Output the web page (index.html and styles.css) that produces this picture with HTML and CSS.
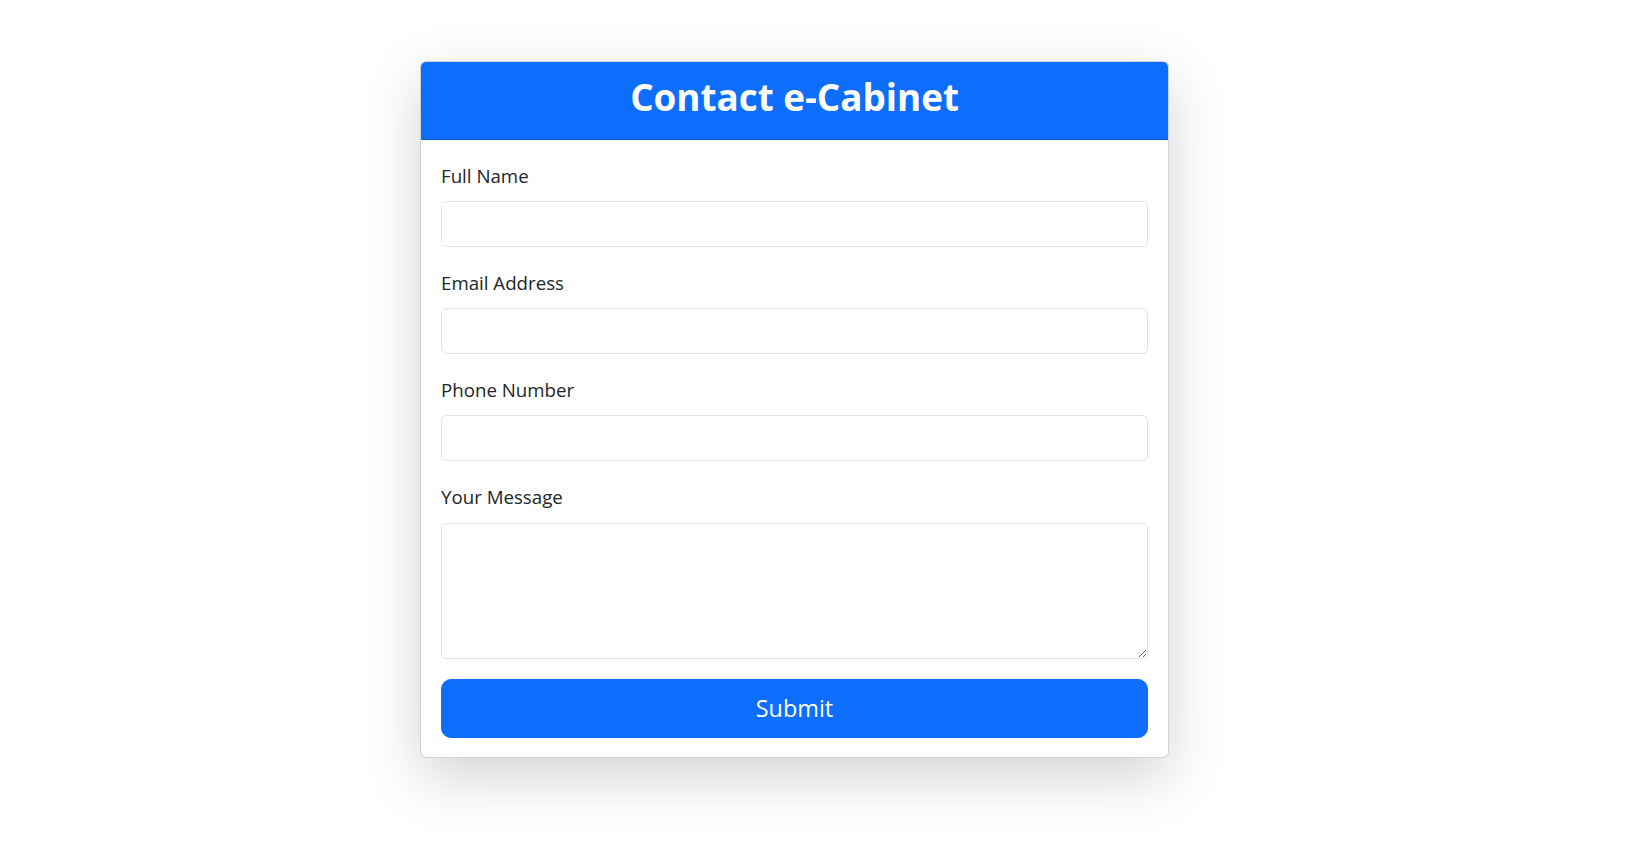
FILE: index.html
```html
<!DOCTYPE html>
<html lang="en">
<head>
<meta charset="utf-8">
<title>Contact e-Cabinet</title>
<link rel="stylesheet" href="styles.css">
</head>
<body>
<div class="page">
  <div class="card">
    <div class="card-header">
      <h2 class="title">Contact e-Cabinet</h2>
    </div>
    <form class="card-body">
      <div class="field">
        <label class="label" for="name">Full Name</label>
        <input class="control" id="name" type="text">
      </div>
      <div class="field">
        <label class="label" for="email">Email Address</label>
        <input class="control" id="email" type="email">
      </div>
      <div class="field">
        <label class="label" for="phone">Phone Number</label>
        <input class="control" id="phone" type="tel">
      </div>
      <div class="field field-last">
        <label class="label" for="msg">Your Message</label>
        <textarea class="control textarea" id="msg"></textarea>
      </div>
      <button class="btn-submit" type="button">Submit</button>
    </form>
  </div>
</div>
</body>
</html>
```
FILE: styles.css
```css
* { box-sizing: border-box; }
html, body { margin: 0; padding: 0; background: #fff; }
body {
  font-family: "Open Sans", "Noto Sans", sans-serif;
  color: #212529;
}
.page {
  min-height: 100vh;
  padding-top: 61px;
  padding-left: 420px;
}
.card {
  width: 749px;
  background: #fff;
  border: 1px solid rgba(0, 0, 0, 0.175);
  border-radius: 6px;
  box-shadow: 0 19px 58px rgba(0, 0, 0, 0.175);
  overflow: hidden;
}
.card-header {
  height: 78px;
  background: #0d6efd;
  border-bottom: 1px solid rgba(0, 0, 0, 0.175);
  padding-top: 12.5px;
  text-align: center;
}
.title {
  margin: 0;
  color: #fff;
  font-size: 36.8px;
  font-weight: 700;
  line-height: 44px;
}
.card-body {
  display: flex;
  flex-direction: column;
  padding: 21.5px 20px 19.5px;
}
.field {
  display: flex;
  flex-direction: column;
  margin-bottom: 22px;
}
.field-last { margin-bottom: 20px; }
.label {
  font-size: 18.7px;
  line-height: 28.8px;
  margin-bottom: 10.5px;
}
.control {
  display: block;
  width: 100%;
  height: 46px;
  border: 1px solid #dee2e6;
  border-radius: 5.5px;
  background: #fff;
  font-family: inherit;
  font-size: 18.7px;
  padding: 7px 14px;
  outline: none;
}
.textarea {
  height: 136px;
  resize: vertical;
}
.btn-submit {
  display: flex;
  align-items: center;
  justify-content: center;
  width: 100%;
  height: 59px;
  border: 1px solid #0d6efd;
  border-radius: 10px;
  background: #0d6efd;
  color: #fff;
  font-family: inherit;
  font-size: 23.4px;
  padding: 0;
  cursor: pointer;
}
```
